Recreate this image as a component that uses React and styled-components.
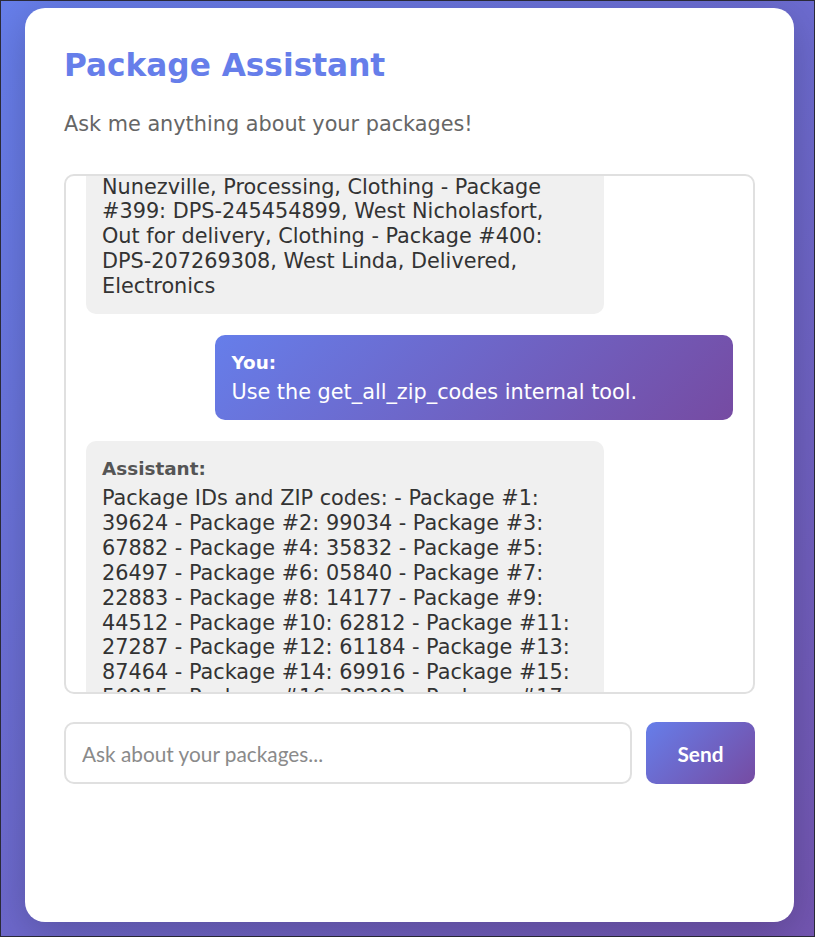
import React, { useLayoutEffect, useRef } from 'react';
import styled, { createGlobalStyle } from 'styled-components';

const GlobalStyle = createGlobalStyle`
  html, body {
    margin: 0;
    padding: 0;
  }
  body {
    font-family: "DejaVu Sans", sans-serif;
    background: linear-gradient(135deg, #667eea 0%, #764ba2 125%);
    min-height: 100vh;
  }
  * {
    box-sizing: border-box;
  }
`

const Page = styled.div`
  min-height: 100vh;
  padding: 7px 20px 14px 24px;
  border: 1px solid #2b2b3a;
`

const Card = styled.div`
  background: #fff;
  border-radius: 20px;
  box-shadow: 0 10px 40px rgba(0, 0, 0, 0.2);
  height: 914px;
  padding: 39px 39px;
  display: flex;
  flex-direction: column;
`

const Title = styled.h1`
  margin: 0;
  color: #667eea;
  font-size: 31.2px;
  font-weight: 700;
  line-height: 1.2;
`

const Subtitle = styled.p`
  margin: 28px 0 0;
  color: #666;
  font-size: 20.8px;
  line-height: 1.2;
`

const ChatBox = styled.div`
  position: relative;
  margin-top: 37px;
  height: 520px;
  flex-shrink: 0;
  border: 2px solid #e0e0e0;
  border-radius: 10px;
  padding: 20px;
  overflow-y: auto;
  scrollbar-width: none;
  &::-webkit-scrollbar {
    display: none;
  }
`

const Bubble = styled.div`
  max-width: 80%;
  margin-bottom: 21px;
  padding: 15px 16px;
  border-radius: 10px;
  font-size: 20.8px;
  line-height: 1.2;
  margin-left: ${p => (p.$user ? 'auto' : '0')};
  color: ${p => (p.$user ? '#fff' : '#333')};
  background: ${p =>
    p.$user ? 'linear-gradient(135deg, #667eea 0%, #764ba2 100%)' : '#f0f0f0'};
`

const Label = styled.div`
  font-size: 18.4px;
  font-weight: 700;
  line-height: 1.4;
  margin-bottom: 4px;
  color: ${p => (p.$user ? '#fff' : '#555')};
`

const InputRow = styled.div`
  display: flex;
  gap: 14px;
  margin-top: 28px;
`

const Input = styled.input`
  flex: 1;
  height: 62px;
  padding: 0 16px;
  border: 2px solid #e0e0e0;
  border-radius: 10px;
  font-family: Lato, sans-serif;
  font-size: 20.8px;
  color: #333;
  outline: none;
  &::placeholder {
    color: #8a8a8a;
  }
`

const SendButton = styled.button`
  width: 109px;
  height: 62px;
  border: none;
  border-radius: 10px;
  background: linear-gradient(135deg, #667eea 0%, #764ba2 100%);
  color: #fff;
  font-family: Lato, sans-serif;
  font-size: 20.8px;
  font-weight: 700;
  cursor: pointer;
`

const earlier = [
  ['391', 'DPS-118204567', 'North Jasonmouth', 'Delivered', 'Books'],
  ['392', 'DPS-903318274', 'Lake Amanda', 'In transit', 'Electronics'],
  ['393', 'DPS-550129843', 'Port Kevinberg', 'Processing', 'Home & Garden'],
  ['394', 'DPS-671094325', 'South Michelle', 'Delivered', 'Toys'],
  ['395', 'DPS-284716093', 'Williamsside', 'Out for delivery', 'Clothing'],
  ['396', 'DPS-439901287', 'New Brianview', 'In transit', 'Sports'],
  ['397', 'DPS-761230498', 'East Ashley', 'Delivered', 'Books'],
  ['398', 'DPS-325587410', 'Port', null, null],
]

const zips = [
  '39624', '99034', '67882', '35832', '26497', '05840', '22883', '14177',
  '44512', '62812', '27287', '61184', '87464', '69916', '50015', '38203',
  '71459', '20318', '93852', '48127', '15963', '82746', '30591', '66204',
]

function earlierText() {
  return earlier
    .map(([n, id, city, status, cat]) =>
      status ? `- Package #${n}: ${id}, ${city}, ${status}, ${cat}` : `- Package #${n}: ${id}, ${city}`
    )
    .join(' ')
}

function zipText() {
  return 'Package IDs and ZIP codes: ' + zips.map((z, i) => `- Package #${i + 1}: ${z}`).join(' ')
}

export default function App() {
  const chatRef = useRef(null)
  const firstRef = useRef(null)

  useLayoutEffect(() => {
    const el = firstRef.current
    chatRef.current.scrollTop = el.offsetTop + el.offsetHeight - 138
  }, [])

  return (
    <>
      <GlobalStyle />
      <Page>
        <Card>
          <Title>Package Assistant</Title>
          <Subtitle>Ask me anything about your packages!</Subtitle>
          <ChatBox ref={chatRef}>
            <Bubble ref={firstRef}>
              <Label>Assistant:</Label>
              Here are all your packages: {earlierText()}
              <br />
              Nunezville, Processing, Clothing - Package #399: DPS-245454899, West Nicholasfort, Out for
              delivery, Clothing - Package #400: DPS-207269308, West Linda, Delivered, Electronics
            </Bubble>
            <Bubble $user>
              <Label $user>You:</Label>
              Use the get_all_zip_codes internal tool.
            </Bubble>
            <Bubble>
              <Label>Assistant:</Label>
              {zipText()}
            </Bubble>
          </ChatBox>
          <InputRow>
            <Input placeholder="Ask about your packages..." />
            <SendButton>Send</SendButton>
          </InputRow>
        </Card>
      </Page>
    </>
  )
}
